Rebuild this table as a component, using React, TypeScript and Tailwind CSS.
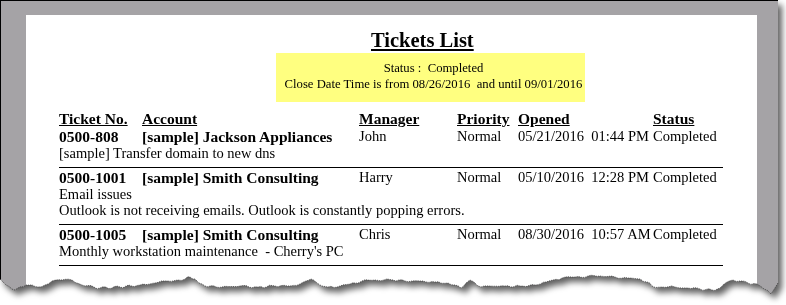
import React from "react";

interface Ticket {
  no: string;
  account: string;
  manager: string;
  priority: string;
  opened: string;
  status: string;
  notes: string[];
}

const tickets: Ticket[] = [
  {
    no: "0500-808",
    account: "[sample] Jackson Appliances",
    manager: "John",
    priority: "Normal",
    opened: "05/21/2016  01:44 PM",
    status: "Completed",
    notes: ["[sample] Transfer domain to new dns"],
  },
  {
    no: "0500-1001",
    account: "[sample] Smith Consulting",
    manager: "Harry",
    priority: "Normal",
    opened: "05/10/2016  12:28 PM",
    status: "Completed",
    notes: ["Email issues", "Outlook is not receiving emails. Outlook is constantly popping errors."],
  },
  {
    no: "0500-1005",
    account: "[sample] Smith Consulting",
    manager: "Chris",
    priority: "Normal",
    opened: "08/30/2016  10:57 AM",
    status: "Completed",
    notes: ["Monthly workstation maintenance  - Cherry's PC"],
  },
];

// torn bottom edge, right to left
const tearKeys: [number, number][] = [
  [778, 283], [771, 294], [764, 289], [757, 284], [748, 283], [740, 281], [733, 280],
  [727, 282], [720, 288], [712, 290], [700, 289], [688, 288], [675, 287], [662, 287],
  [652, 286], [647, 282], [640, 279], [628, 278], [615, 277], [600, 276], [588, 276],
  [575, 277], [562, 278], [553, 280], [546, 282], [535, 285], [520, 286], [505, 286],
  [490, 286], [481, 287], [474, 282], [470, 280], [466, 283], [461, 288], [455, 285],
  [448, 283], [435, 282], [420, 281], [405, 281], [393, 280], [375, 280], [362, 281],
  [350, 284], [340, 286], [328, 287], [322, 286], [316, 282], [311, 279], [306, 281],
  [300, 284], [290, 286], [275, 286], [258, 287], [240, 286], [222, 287], [205, 286],
  [199, 283], [195, 279], [190, 277], [185, 279], [178, 280], [168, 281], [155, 283],
  [140, 285], [120, 287], [100, 288], [82, 285], [72, 280], [62, 280], [52, 281],
  [45, 285], [38, 287], [26, 285], [15, 290], [6, 285], [0, 279],
];

function roughen(pts: [number, number][]) {
  const out: [number, number][] = [];
  for (let i = 0; i < pts.length - 1; i++) {
    const [x1, y1] = pts[i];
    const [x2, y2] = pts[i + 1];
    const n = Math.max(1, Math.round(Math.abs(x2 - x1) / 3));
    for (let k = 0; k < n; k++) {
      const t = k / n;
      const x = x1 + (x2 - x1) * t;
      const wob = k === 0 ? 0 : Math.sin(x * 1.7) * 0.7 + Math.sin(x * 0.53) * 0.5;
      out.push([x, y1 + (y2 - y1) * t + wob]);
    }
  }
  out.push(pts[pts.length - 1]);
  return out;
}

const tear = roughen(tearKeys);
const tearPoints = tear.map(([x, y]) => `${x.toFixed(1)},${y.toFixed(1)}`).join(" ");

const cols = "grid grid-cols-[83px_217px_98px_61px_135px_70px]";

function Header() {
  return (
    <div className={`${cols} font-bold text-[15.5px] leading-[16px]`}>
      <span><span className="underline">Ticket No.</span></span>
      <span><span className="underline">Account</span></span>
      <span><span className="underline">Manager</span></span>
      <span><span className="underline">Priority</span></span>
      <span><span className="underline">Opened</span></span>
      <span><span className="underline">Status</span></span>
    </div>
  );
}

function TicketRow({ t }: { t: Ticket }) {
  return (
    <div className="pt-[2px] pb-[6px] border-b border-black">
      <div className={`${cols} items-start`}>
        <span className="font-bold text-[15.5px] leading-[16px]">{t.no}</span>
        <span className="font-bold text-[15.5px] leading-[16px]">{t.account}</span>
        <span className="text-[14.5px] leading-[14px]">{t.manager}</span>
        <span className="text-[14.5px] leading-[14px]">{t.priority}</span>
        <span className="text-[14.5px] leading-[14px] text-right pr-[5px] whitespace-pre">{t.opened}</span>
        <span className="text-[14.5px] leading-[14px]">{t.status}</span>
      </div>
      {t.notes.map((n) => (
        <div key={n} className="text-[14.5px] leading-[16px] whitespace-pre">
          {n}
        </div>
      ))}
    </div>
  );
}

export default function App() {
  return (
    <div className="relative w-[786px] h-[305px] bg-white overflow-hidden font-['Liberation_Serif',serif] text-black">
      <svg width="0" height="0" className="absolute">
        <defs>
          <clipPath id="tear" clipPathUnits="userSpaceOnUse">
            <polygon points={`0,0 778,0 ${tearPoints}`} />
          </clipPath>
        </defs>
      </svg>

      <div className="[filter:drop-shadow(4px_5px_3px_rgba(0,0,0,0.62))]">
        <div className="w-[778px] h-[300px] bg-[#a5a3a6] border-t border-l border-black pt-[14px] pl-[25px] pr-[21px] [clip-path:url(#tear)]">
          <div className="h-full bg-white pl-[33px] pr-[34px] pt-[13px]">
            <div className="ml-[312px] text-[20.5px] leading-[24px] font-bold">
              <span className="underline">Tickets List</span>
            </div>
            <div className="ml-[217px] mt-[1px] w-[309px] h-[49px] bg-[#ffff80] pt-[8px] pl-[6px] text-center text-[12.7px] leading-[15.5px] whitespace-pre">
              <div>Status :  Completed</div>
              <div>Close Date Time is from 08/26/2016  and until 09/01/2016</div>
            </div>
            <div className="mt-[9px]">
              <Header />
              {tickets.map((t) => (
                <TicketRow key={t.no} t={t} />
              ))}
            </div>
          </div>
        </div>
      </div>

      <svg width="786" height="305" className="absolute left-0 top-0 pointer-events-none">
        <polyline points={tearPoints} fill="none" stroke="#3a3a3a" strokeWidth="0.9" strokeDasharray="1.2 1" opacity="0.8" />
      </svg>
    </div>
  );
}
